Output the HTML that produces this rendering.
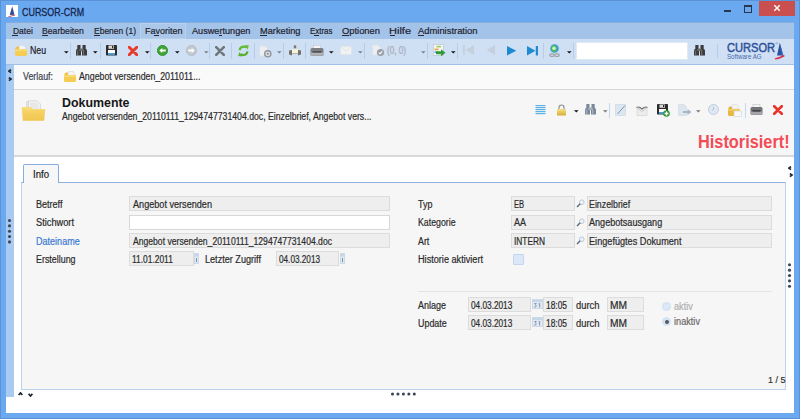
<!DOCTYPE html>
<html><head><meta charset="utf-8"><style>
html,body{margin:0;padding:0;}
body{width:800px;height:419px;position:relative;overflow:hidden;background:#6aa9f0;font-family:"Liberation Sans",sans-serif;}
.a{position:absolute;}
.t{position:absolute;white-space:nowrap;transform-origin:0 0;-webkit-text-stroke:0.2px currentColor;}
</style></head><body>
<div class="a" style="left:0px;top:0px;width:800px;height:419px;background:#6aa9f0;"></div>
<div class="a" style="left:0px;top:0px;width:800px;height:1px;background:#5b93d6;"></div>
<div class="a" style="left:0px;top:0px;width:1px;height:419px;background:#5b93d6;"></div>
<div class="a" style="left:799px;top:0px;width:1px;height:419px;background:#5b93d6;"></div>
<div class="a" style="left:0px;top:418px;width:800px;height:1px;background:#5b93d6;"></div>
<svg class="a" style="left:6px;top:5px" width="12" height="12" viewBox="0 0 12 12">
<rect width="12" height="12" fill="#fff"/>
<path d="M6.2 1.3 L8.4 9.8 L3.8 9.9 Z" fill="#2a4aa0"/>
<path d="M2.5 11.3 Q6 10.3 9 9.4 L8.8 10.6 Q6 11.4 2.5 11.9Z" fill="#c8203c"/>
</svg>
<span class="t" style="left:22.30px;top:7.00px;font-size:11.5px;line-height:11.5px;color:#15244a;transform:scaleX(0.7775);-webkit-text-stroke:0.3px currentColor;">CURSOR-CRM</span>
<div class="a" style="left:724px;top:10px;width:7px;height:2px;background:#2a3550;"></div>
<div class="a" style="left:744px;top:5px;width:6px;height:5px;border:1px solid #2a3550;border-top-width:2px;"></div>
<div class="a" style="left:759px;top:1px;width:36px;height:15px;background:#c9504f;"></div>
<svg class="a" style="left:773px;top:4px" width="8" height="8" viewBox="0 0 8 8">
<path d="M1.3 1.3 L6.7 6.7 M6.7 1.3 L1.3 6.7" stroke="#fff" stroke-width="1.4"/></svg>
<div class="a" style="left:6px;top:22px;width:788px;height:17px;background:#a4c3e8;"></div>
<div class="a" style="left:6px;top:22px;width:788px;height:1px;background:#86ade0;"></div>
<div class="a" style="left:140px;top:23px;width:46px;height:16px;background:#abc8ea;border:1px solid #b6d0ee;box-sizing:border-box;"></div>
<span class="t" style="left:12.50px;top:26.00px;font-size:9.5px;line-height:9.5px;color:#1e1e2e;transform:scaleX(0.8926);">Datei</span>
<span class="t" style="left:41.90px;top:26.00px;font-size:9.5px;line-height:9.5px;color:#1e1e2e;transform:scaleX(0.9100);">Bearbeiten</span>
<span class="t" style="left:94.00px;top:26.00px;font-size:9.5px;line-height:9.5px;color:#1e1e2e;transform:scaleX(0.8931);">Ebenen (1)</span>
<span class="t" style="left:145.00px;top:26.00px;font-size:9.5px;line-height:9.5px;color:#1e1e2e;transform:scaleX(0.9466);">Favoriten</span>
<span class="t" style="left:191.90px;top:26.00px;font-size:9.5px;line-height:9.5px;color:#1e1e2e;transform:scaleX(0.9613);">Auswertungen</span>
<span class="t" style="left:260.00px;top:26.00px;font-size:9.5px;line-height:9.5px;color:#1e1e2e;transform:scaleX(0.9711);">Marketing</span>
<span class="t" style="left:310.00px;top:26.00px;font-size:9.5px;line-height:9.5px;color:#1e1e2e;transform:scaleX(0.8354);">Extras</span>
<span class="t" style="left:342.00px;top:26.00px;font-size:9.5px;line-height:9.5px;color:#1e1e2e;transform:scaleX(0.9852);">Optionen</span>
<span class="t" style="left:389.00px;top:26.00px;font-size:9.5px;line-height:9.5px;color:#1e1e2e;transform:scaleX(1.1579);">Hilfe</span>
<span class="t" style="left:417.50px;top:26.00px;font-size:9.5px;line-height:9.5px;color:#1e1e2e;transform:scaleX(0.9887);">Administration</span>
<div class="a" style="left:12px;top:35px;width:6px;height:1px;background:#2a2a3a;"></div>
<div class="a" style="left:42px;top:35px;width:6px;height:1px;background:#2a2a3a;"></div>
<div class="a" style="left:94px;top:35px;width:6px;height:1px;background:#2a2a3a;"></div>
<div class="a" style="left:154px;top:35px;width:5px;height:1px;background:#2a2a3a;"></div>
<div class="a" style="left:219px;top:35px;width:3px;height:1px;background:#2a2a3a;"></div>
<div class="a" style="left:260px;top:35px;width:7px;height:1px;background:#2a2a3a;"></div>
<div class="a" style="left:314px;top:35px;width:5px;height:1px;background:#2a2a3a;"></div>
<div class="a" style="left:342px;top:35px;width:7px;height:1px;background:#2a2a3a;"></div>
<div class="a" style="left:390px;top:35px;width:5px;height:1px;background:#2a2a3a;"></div>
<div class="a" style="left:418px;top:35px;width:6px;height:1px;background:#2a2a3a;"></div>
<div class="a" style="left:6px;top:39px;width:788px;height:26px;background:#cfe0f5;"></div>
<div class="a" style="left:6px;top:64px;width:788px;height:1px;background:#9fc0e8;"></div>
<div class="a" style="left:6px;top:65px;width:788px;height:348px;background:#ffffff;"></div>
<div class="a" style="left:6px;top:65px;width:8px;height:332px;background:#a9cbf1;"></div>
<div class="a" style="left:14px;top:65px;width:780px;height:24px;background:#fafafa;"></div>
<div class="a" style="left:14px;top:89px;width:780px;height:1px;background:#d6d6d6;"></div>
<span class="t" style="left:23.00px;top:72.00px;font-size:10px;line-height:10px;color:#3d4453;transform:scaleX(0.8850);">Verlauf:</span>
<span class="t" style="left:79.00px;top:72.00px;font-size:10px;line-height:10px;color:#2b2b2b;transform:scaleX(0.8798);">Angebot versenden_2011011...</span>
<div class="a" style="left:14px;top:90px;width:780px;height:65px;background:#f6f6f6;"></div>
<div class="a" style="left:14px;top:155px;width:780px;height:2px;background:#d9d9d9;"></div>
<span class="t" style="left:61.50px;top:97.00px;font-size:12.5px;line-height:12.5px;color:#161616;font-weight:bold;transform:scaleX(0.9917);-webkit-text-stroke:0;">Dokumente</span>
<span class="t" style="left:61.50px;top:112.00px;font-size:10px;line-height:10px;color:#2b2b2b;transform:scaleX(0.8697);">Angebot versenden_20110111_1294747731404.doc, Einzelbrief, Angebot vers...</span>
<span class="t" style="left:697.75px;top:133.00px;font-size:18px;line-height:18px;color:#f34c57;font-weight:bold;transform:scaleX(0.9076);-webkit-text-stroke:0;">Historisiert!</span>
<div class="a" style="left:21px;top:182px;width:763px;height:206px;background:#f6f6f6;border:1px solid #bcd3ee;border-top-color:#8cb1e1;"></div>
<div class="a" style="left:23px;top:164px;width:34px;height:18px;background:#f7f7f7;border:1px solid #86ade0;border-bottom:none;border-radius:2px 2px 0 0;"></div>
<span class="t" style="left:33.00px;top:170.00px;font-size:10px;line-height:10px;color:#222;transform:scaleX(0.9581);">Info</span>
<span class="t" style="left:35.70px;top:200.00px;font-size:10px;line-height:10px;color:#2b2b2b;transform:scaleX(0.9044);">Betreff</span>
<span class="t" style="left:35.70px;top:218.00px;font-size:10px;line-height:10px;color:#2b2b2b;transform:scaleX(0.9246);">Stichwort</span>
<span class="t" style="left:35.70px;top:237.00px;font-size:10px;line-height:10px;color:#3a7ad4;transform:scaleX(0.9038);">Dateiname</span>
<span class="t" style="left:35.70px;top:255.00px;font-size:10px;line-height:10px;color:#2b2b2b;transform:scaleX(0.8886);">Erstellung</span>
<div class="a" style="left:129px;top:196px;width:261px;height:15px;background:#eeeeee;border:1px solid #dcdcdc;box-sizing:border-box;"></div>
<div class="a" style="left:129px;top:215px;width:261px;height:15px;background:#ffffff;border:1px solid #d8d8d8;box-sizing:border-box;"></div>
<div class="a" style="left:129px;top:233px;width:261px;height:15px;background:#eeeeee;border:1px solid #dcdcdc;box-sizing:border-box;"></div>
<div class="a" style="left:129px;top:251px;width:65px;height:15px;background:#eeeeee;border:1px solid #dcdcdc;box-sizing:border-box;"></div>
<div class="a" style="left:276px;top:251px;width:63px;height:15px;background:#eeeeee;border:1px solid #dcdcdc;box-sizing:border-box;"></div>
<span class="t" style="left:133.00px;top:200.00px;font-size:10px;line-height:10px;color:#2b2b2b;transform:scaleX(0.9107);">Angebot versenden</span>
<span class="t" style="left:133.00px;top:237.00px;font-size:10px;line-height:10px;color:#2b2b2b;transform:scaleX(0.8602);">Angebot versenden_20110111_1294747731404.doc</span>
<span class="t" style="left:132.00px;top:255.00px;font-size:10px;line-height:10px;color:#2b2b2b;transform:scaleX(0.8404);">11.01.2011</span>
<span class="t" style="left:205.00px;top:255.00px;font-size:10px;line-height:10px;color:#2b2b2b;transform:scaleX(0.9098);">Letzter Zugriff</span>
<span class="t" style="left:279.00px;top:255.00px;font-size:10px;line-height:10px;color:#2b2b2b;transform:scaleX(0.8192);">04.03.2013</span>
<span class="t" style="left:418.00px;top:200.00px;font-size:10px;line-height:10px;color:#2b2b2b;transform:scaleX(0.8944);">Typ</span>
<span class="t" style="left:418.00px;top:218.00px;font-size:10px;line-height:10px;color:#2b2b2b;transform:scaleX(0.8785);">Kategorie</span>
<span class="t" style="left:418.00px;top:237.00px;font-size:10px;line-height:10px;color:#2b2b2b;transform:scaleX(0.8828);">Art</span>
<span class="t" style="left:418.00px;top:255.00px;font-size:10px;line-height:10px;color:#2b2b2b;transform:scaleX(0.9136);">Historie aktiviert</span>
<div class="a" style="left:511px;top:196px;width:64px;height:15px;background:#eeeeee;border:1px solid #dcdcdc;box-sizing:border-box;"></div>
<div class="a" style="left:587px;top:196px;width:185px;height:15px;background:#eeeeee;border:1px solid #dcdcdc;box-sizing:border-box;"></div>
<span class="t" style="left:514.30px;top:200.00px;font-size:10px;line-height:10px;color:#2b2b2b;transform:scaleX(0.7566);">EB</span>
<span class="t" style="left:589.30px;top:200.00px;font-size:10px;line-height:10px;color:#2b2b2b;transform:scaleX(0.8822);">Einzelbrief</span>
<svg class="a" style="left:576px;top:199px" width="9" height="9" viewBox="0 0 9 9">
<circle cx="5.8" cy="3.2" r="2.3" fill="#eef3f8" stroke="#b9c8d8" stroke-width="1"/>
<path d="M4.2 4.8 L1 8" stroke="#56687a" stroke-width="1.4"/></svg>
<div class="a" style="left:511px;top:215px;width:64px;height:15px;background:#eeeeee;border:1px solid #dcdcdc;box-sizing:border-box;"></div>
<div class="a" style="left:587px;top:215px;width:185px;height:15px;background:#eeeeee;border:1px solid #dcdcdc;box-sizing:border-box;"></div>
<span class="t" style="left:514.30px;top:218.00px;font-size:10px;line-height:10px;color:#2b2b2b;transform:scaleX(0.8989);">AA</span>
<span class="t" style="left:589.30px;top:218.00px;font-size:10px;line-height:10px;color:#2b2b2b;transform:scaleX(0.9076);">Angebotsausgang</span>
<svg class="a" style="left:576px;top:218px" width="9" height="9" viewBox="0 0 9 9">
<circle cx="5.8" cy="3.2" r="2.3" fill="#eef3f8" stroke="#b9c8d8" stroke-width="1"/>
<path d="M4.2 4.8 L1 8" stroke="#56687a" stroke-width="1.4"/></svg>
<div class="a" style="left:511px;top:233px;width:64px;height:15px;background:#eeeeee;border:1px solid #dcdcdc;box-sizing:border-box;"></div>
<div class="a" style="left:587px;top:233px;width:185px;height:15px;background:#eeeeee;border:1px solid #dcdcdc;box-sizing:border-box;"></div>
<span class="t" style="left:514.30px;top:237.00px;font-size:10px;line-height:10px;color:#2b2b2b;transform:scaleX(0.8360);">INTERN</span>
<span class="t" style="left:589.30px;top:237.00px;font-size:10px;line-height:10px;color:#2b2b2b;transform:scaleX(0.9140);">Eingefügtes Dokument</span>
<svg class="a" style="left:576px;top:236px" width="9" height="9" viewBox="0 0 9 9">
<circle cx="5.8" cy="3.2" r="2.3" fill="#eef3f8" stroke="#b9c8d8" stroke-width="1"/>
<path d="M4.2 4.8 L1 8" stroke="#56687a" stroke-width="1.4"/></svg>
<div class="a" style="left:513px;top:254px;width:11px;height:11px;background:#dce8f7;border:1px solid #c3d6ee;box-sizing:border-box;border-radius:1px;"></div>
<div class="a" style="left:418px;top:291px;width:354px;height:1px;background:#e4e4e4;"></div>
<span class="t" style="left:418.00px;top:301.00px;font-size:10px;line-height:10px;color:#2b2b2b;transform:scaleX(0.8989);">Anlage</span>
<div class="a" style="left:468px;top:297px;width:63px;height:15px;background:#eeeeee;border:1px solid #dcdcdc;box-sizing:border-box;"></div>
<svg class="a" style="left:532px;top:299px" width="11" height="10" viewBox="0 0 11 10"><rect x="0.5" y="0.5" width="10" height="9" fill="#e1e9f3" stroke="#ccd9e8" stroke-width="1"/><rect x="1" y="1" width="9" height="2" fill="#c6d6ea"/><path d="M2.3 4.5 H4.3 L3.3 5.8 Q4.5 6.2 4.2 7.4 Q3.5 8.4 2.2 7.8 M6.5 5 L7.6 4.3 V8.5" fill="none" stroke="#8090a4" stroke-width="0.9"/></svg>
<div class="a" style="left:543px;top:297px;width:30px;height:15px;background:#eeeeee;border:1px solid #dcdcdc;box-sizing:border-box;"></div>
<div class="a" style="left:607px;top:297px;width:37px;height:15px;background:#eeeeee;border:1px solid #dcdcdc;box-sizing:border-box;"></div>
<span class="t" style="left:470.70px;top:301.00px;font-size:10px;line-height:10px;color:#2b2b2b;transform:scaleX(0.8252);">04.03.2013</span>
<span class="t" style="left:545.90px;top:301.00px;font-size:10px;line-height:10px;color:#2b2b2b;transform:scaleX(0.8383);">18:05</span>
<span class="t" style="left:575.60px;top:301.00px;font-size:10px;line-height:10px;color:#2b2b2b;transform:scaleX(0.9360);">durch</span>
<span class="t" style="left:610.00px;top:301.00px;font-size:10px;line-height:10px;color:#2b2b2b;transform:scaleX(1.0210);">MM</span>
<span class="t" style="left:418.00px;top:319.00px;font-size:10px;line-height:10px;color:#2b2b2b;transform:scaleX(0.8899);">Update</span>
<div class="a" style="left:468px;top:315px;width:63px;height:15px;background:#eeeeee;border:1px solid #dcdcdc;box-sizing:border-box;"></div>
<svg class="a" style="left:532px;top:317px" width="11" height="10" viewBox="0 0 11 10"><rect x="0.5" y="0.5" width="10" height="9" fill="#e1e9f3" stroke="#ccd9e8" stroke-width="1"/><rect x="1" y="1" width="9" height="2" fill="#c6d6ea"/><path d="M2.3 4.5 H4.3 L3.3 5.8 Q4.5 6.2 4.2 7.4 Q3.5 8.4 2.2 7.8 M6.5 5 L7.6 4.3 V8.5" fill="none" stroke="#8090a4" stroke-width="0.9"/></svg>
<div class="a" style="left:543px;top:315px;width:30px;height:15px;background:#eeeeee;border:1px solid #dcdcdc;box-sizing:border-box;"></div>
<div class="a" style="left:607px;top:315px;width:37px;height:15px;background:#eeeeee;border:1px solid #dcdcdc;box-sizing:border-box;"></div>
<span class="t" style="left:470.70px;top:319.00px;font-size:10px;line-height:10px;color:#2b2b2b;transform:scaleX(0.8252);">04.03.2013</span>
<span class="t" style="left:545.90px;top:319.00px;font-size:10px;line-height:10px;color:#2b2b2b;transform:scaleX(0.8383);">18:05</span>
<span class="t" style="left:575.60px;top:319.00px;font-size:10px;line-height:10px;color:#2b2b2b;transform:scaleX(0.9360);">durch</span>
<span class="t" style="left:610.00px;top:319.00px;font-size:10px;line-height:10px;color:#2b2b2b;transform:scaleX(1.0210);">MM</span>
<div class="a" style="left:662px;top:302px;width:9px;height:9px;border-radius:50%;background:#dde8f6;border:1px solid #d0dff1;box-sizing:border-box;"></div>
<div class="a" style="left:662px;top:317px;width:9px;height:9px;border-radius:50%;background:#d3e2f5;border:1px solid #d3e2f5;box-sizing:border-box;"></div>
<div class="a" style="left:664.5px;top:319.5px;width:4px;height:4px;background:#55575c;border-radius:50%;"></div>
<span class="t" style="left:673.75px;top:302.00px;font-size:10px;line-height:10px;color:#b0b0b0;transform:scaleX(0.9124);">aktiv</span>
<span class="t" style="left:674.00px;top:317.00px;font-size:10px;line-height:10px;color:#6b6b6b;transform:scaleX(0.9171);">inaktiv</span>
<span class="t" style="left:767.70px;top:375.00px;font-size:9.5px;line-height:9.5px;color:#333333;transform:scaleX(0.9471);">1 / 5</span>
<svg class="a" style="left:0;top:0" width="800" height="419"><circle cx="9.50" cy="220.50" r="1.55" fill="#3b4757"/><circle cx="9.50" cy="225.85" r="1.55" fill="#3b4757"/><circle cx="9.50" cy="231.20" r="1.55" fill="#3b4757"/><circle cx="9.50" cy="236.55" r="1.55" fill="#3b4757"/><circle cx="9.50" cy="241.90" r="1.55" fill="#3b4757"/></svg>
<svg class="a" style="left:0;top:0" width="800" height="419"><circle cx="789.50" cy="264.80" r="1.55" fill="#3b4757"/><circle cx="789.50" cy="270.15" r="1.55" fill="#3b4757"/><circle cx="789.50" cy="275.50" r="1.55" fill="#3b4757"/><circle cx="789.50" cy="280.85" r="1.55" fill="#3b4757"/><circle cx="789.50" cy="286.20" r="1.55" fill="#3b4757"/></svg>
<svg class="a" style="left:0;top:0" width="800" height="419"><circle cx="392.50" cy="394.00" r="1.55" fill="#3b4757"/><circle cx="397.95" cy="394.00" r="1.55" fill="#3b4757"/><circle cx="403.40" cy="394.00" r="1.55" fill="#3b4757"/><circle cx="408.85" cy="394.00" r="1.55" fill="#3b4757"/><circle cx="414.30" cy="394.00" r="1.55" fill="#3b4757"/></svg>
<svg class="a" style="left:7.5px;top:68.5px" width="5" height="5" viewBox="0 0 5 5"><path d="M3 0.6 L0.9 2.1 L3 3.6" fill="none" stroke="#1b2533" stroke-width="1.7"/></svg>
<svg class="a" style="left:7.8px;top:76.5px" width="5" height="5" viewBox="0 0 5 5"><path d="M0.9 0.6 L3 2.1 L0.9 3.6" fill="none" stroke="#1b2533" stroke-width="1.7"/></svg>
<svg class="a" style="left:788px;top:165.5px" width="5" height="5" viewBox="0 0 5 5"><path d="M3 0.6 L0.9 2.1 L3 3.6" fill="none" stroke="#1b2533" stroke-width="1.7"/></svg>
<svg class="a" style="left:788.8px;top:173px" width="5" height="5" viewBox="0 0 5 5"><path d="M0.9 0.6 L3 2.1 L0.9 3.6" fill="none" stroke="#1b2533" stroke-width="1.7"/></svg>
<svg class="a" style="left:18px;top:391.5px" width="5" height="5" viewBox="0 0 5 5"><path d="M0.6 3 L2.5 0.9 L4.4 3" fill="none" stroke="#1b2533" stroke-width="1.7"/></svg>
<svg class="a" style="left:28px;top:392.5px" width="5" height="5" viewBox="0 0 5 5"><path d="M0.6 0.9 L2.5 3 L4.4 0.9" fill="none" stroke="#1b2533" stroke-width="1.7"/></svg>
<svg class="a" style="left:15px;top:45px" width="12.0" height="11.0" viewBox="0 0 12 11"><path d="M0.5 3.5 Q0.5 1.5 2.5 1.5 H4 Q5.5 1.5 5.5 3 V5 H0.5Z" fill="#efc043"/><path d="M4 4.5 V2 Q4 0.3 6 0.3 H8 Q10 0.3 10.5 2.5 V4.5Z" fill="#f4f4f4" stroke="#cdcdcd" stroke-width="0.5"/><path d="M0 4.2 H12 V9.5 Q12 11 10.5 11 H1.5 Q0 11 0 9.5Z" fill="#f5cd52"/><path d="M0 4.2 H12 V6 H0Z" fill="#f8da73"/></svg>
<span class="t" style="left:29.90px;top:46.00px;font-size:10px;line-height:10px;color:#1e2030;transform:scaleX(0.8774);">Neu</span>
<svg class="a" style="left:64px;top:51px" width="5" height="3" viewBox="0 0 5 3"><path d="M0 0.2 H4.6 L2.3 2.6Z" fill="#111"/></svg>
<div class="a" style="left:70px;top:43px;width:1px;height:16px;background:#b3cdeb;"></div>
<svg class="a" style="left:76px;top:45px" width="11" height="11" viewBox="0 0 11 11"><rect x="1.3" y="0" width="3.2" height="4.5" rx="0.4" fill="#3b3b3b"/><rect x="6.5" y="0" width="3.2" height="4.5" rx="0.4" fill="#3b3b3b"/><rect x="4.3" y="3.5" width="2.4" height="2.8" fill="#6a6a6a"/><path d="M0.8 4 H4.6 L5 5 V10.6 H0 V5.5Z" fill="#3b3b3b"/><path d="M10.2 4 H6.4 L6 5 V10.6 H11 V5.5Z" fill="#3b3b3b"/><rect x="0.9" y="5.5" width="1.3" height="4.5" fill="#6a6a6a"/><rect x="7" y="5.5" width="1.3" height="4.5" fill="#6a6a6a"/><rect x="3.2" y="4" width="4.6" height="2" fill="#6a6a6a"/></svg>
<svg class="a" style="left:93px;top:51px" width="5" height="3" viewBox="0 0 5 3"><path d="M0 0.2 H4.6 L2.3 2.6Z" fill="#111"/></svg>
<div class="a" style="left:100px;top:43px;width:1px;height:16px;background:#b3cdeb;"></div>
<svg class="a" style="left:106px;top:45px" width="13" height="13" viewBox="0 0 13 13"><rect x="0" y="0" width="11" height="10.5" rx="0.8" fill="#2c2c2c"/><rect x="2.5" y="0.5" width="5.5" height="3.3" fill="#d9d9d9"/><rect x="6" y="1" width="1.3" height="2.2" fill="#2c2c2c"/><rect x="2" y="5" width="7" height="3.5" fill="#ffffff"/><rect x="2" y="8.3" width="7" height="1.7" fill="#3c9ad8"/></svg>
<svg class="a" style="left:128px;top:45.5px" width="10" height="10" viewBox="0 0 10 10"><path d="M1.2 1.2 L8.8 8.8 M8.8 1.2 L1.2 8.8" stroke="#e8392a" stroke-width="3" stroke-linecap="round"/></svg>
<svg class="a" style="left:144.5px;top:51px" width="5" height="3" viewBox="0 0 5 3"><path d="M0 0.2 H4.6 L2.3 2.6Z" fill="#111"/></svg>
<div class="a" style="left:150px;top:43px;width:1px;height:16px;background:#b3cdeb;"></div>
<svg class="a" style="left:157px;top:44.8px" width="11" height="11" viewBox="0 0 11 11"><circle cx="5.5" cy="5.5" r="5.1" fill="#3ea535" stroke="#268a1f" stroke-width="0.8"/><path d="M2.3 5.5 L5.2 3 V4.5 H8.7 V6.5 H5.2 V8Z" fill="#fff"/></svg>
<svg class="a" style="left:174.5px;top:51px" width="5" height="3" viewBox="0 0 5 3"><path d="M0 0.2 H4.6 L2.3 2.6Z" fill="#111"/></svg>
<svg class="a" style="left:186px;top:45px" width="11" height="11" viewBox="0 0 11 11"><circle cx="5.5" cy="5.5" r="5.1" fill="#c3c9d0" stroke="#aeb5bd" stroke-width="0.8"/><path d="M8.7 5.5 L5.8 3 V4.5 H2.3 V6.5 H5.8 V8Z" fill="#fff"/></svg>
<svg class="a" style="left:203.5px;top:51px" width="5" height="3" viewBox="0 0 5 3"><path d="M0 0.2 H4.6 L2.3 2.6Z" fill="#7a7f86"/></svg>
<div class="a" style="left:209px;top:43px;width:1px;height:16px;background:#b3cdeb;"></div>
<svg class="a" style="left:215px;top:45.5px" width="10" height="10" viewBox="0 0 10 10"><path d="M1.2 1.2 L8.8 8.8 M8.8 1.2 L1.2 8.8" stroke="#6f767e" stroke-width="2.6" stroke-linecap="round"/></svg>
<div class="a" style="left:231px;top:43px;width:1px;height:16px;background:#b3cdeb;"></div>
<svg class="a" style="left:238px;top:44.5px" width="11" height="12" viewBox="0 0 11 12"><path d="M1.6 5.2 Q2.2 1.5 6 1.6 Q7.6 1.7 8.4 2.6" fill="none" stroke="#62bb30" stroke-width="2.2"/><path d="M6.8 0 L10.8 0.6 L9.6 4.6Z" fill="#62bb30"/><path d="M9.4 6.4 Q8.8 10.1 5 10 Q3.4 9.9 2.6 9" fill="none" stroke="#58b028" stroke-width="2.2"/><path d="M4.2 11.6 L0.2 11 L1.4 7Z" fill="#58b028"/></svg>
<div class="a" style="left:254px;top:43px;width:1px;height:16px;background:#b3cdeb;"></div>
<svg class="a" style="left:259px;top:44.5px" width="13" height="13" viewBox="0 0 13 13"><path d="M0.5 1 H6 L8.5 3.5 V11 H0.5Z" fill="#eceef1" stroke="#dcdfe3" stroke-width="0.7"/><circle cx="8.8" cy="8.8" r="3.1" fill="#eef0f2" stroke="#8f959c" stroke-width="1.4"/><path d="M8.8 7.3 V10.3 M7.3 8.8 H10.3" stroke="#8f959c" stroke-width="1"/></svg>
<svg class="a" style="left:277px;top:51px" width="5" height="3" viewBox="0 0 5 3"><path d="M0 0.2 H4.6 L2.3 2.6Z" fill="#7a7f86"/></svg>
<div class="a" style="left:283px;top:43px;width:1px;height:16px;background:#b3cdeb;"></div>
<svg class="a" style="left:289px;top:44.5px" width="12" height="11" viewBox="0 0 12 11"><rect x="4.8" y="0.3" width="2.4" height="3.5" fill="#7d7a6e"/><path d="M2 5 L5 3.5 H7 L10 5 V8 H2Z" fill="#eeebd6"/><path d="M0 5.5 L3 5 V10.5 L0 9.5Z" fill="#747268"/><path d="M12 5.5 L9 5 V10.5 L12 9.5Z" fill="#747268"/><rect x="3" y="5" width="6" height="3" fill="#f4f2e2"/><rect x="3" y="8" width="6" height="1" fill="#b9b69f"/></svg>
<div class="a" style="left:305px;top:43px;width:1px;height:16px;background:#b3cdeb;"></div>
<svg class="a" style="left:310px;top:45px" width="14" height="11" viewBox="0 0 14 11"><rect x="3.5" y="0.3" width="7" height="3.5" fill="#f5f5f5" stroke="#c4c4c4" stroke-width="0.6"/><path d="M0.5 4.5 Q0.5 3 2 3 H12 Q13.5 3 13.5 4.5 V10 Q13.5 10.8 12.7 10.8 H1.3 Q0.5 10.8 0.5 10Z" fill="#7c7f83"/><rect x="1" y="7.5" width="12" height="3" fill="#b0b3b6"/><rect x="2.5" y="6.3" width="9" height="1.2" fill="#3c3e41"/></svg>
<svg class="a" style="left:329px;top:51px" width="5" height="3" viewBox="0 0 5 3"><path d="M0 0.2 H4.6 L2.3 2.6Z" fill="#111"/></svg>
<svg class="a" style="left:340px;top:46px" width="12" height="9" viewBox="0 0 12 9"><rect x="0.3" y="0.3" width="11.4" height="8.4" fill="#eff1f3" stroke="#dde1e5" stroke-width="0.6"/><path d="M0.5 0.5 L6 5 L11.5 0.5" fill="none" stroke="#dde1e5" stroke-width="0.7"/></svg>
<svg class="a" style="left:358px;top:51px" width="5" height="3" viewBox="0 0 5 3"><path d="M0 0.2 H4.6 L2.3 2.6Z" fill="#7a7f86"/></svg>
<div class="a" style="left:364px;top:43px;width:1px;height:16px;background:#b3cdeb;"></div>
<svg class="a" style="left:371.5px;top:44px" width="13" height="13" viewBox="0 0 13 13"><path d="M0.5 1 H6 L8.5 3.5 V11 H0.5Z" fill="#eceef1" stroke="#dcdfe3" stroke-width="0.7"/><circle cx="8.5" cy="8.5" r="3.6" fill="#9aa0a8"/><path d="M6.8 8.6 L8.1 9.8 L10.2 7.3" fill="none" stroke="#fff" stroke-width="1.1"/></svg>
<span class="t" style="left:387.00px;top:46.00px;font-size:10px;line-height:10px;color:#a7a9b6;transform:scaleX(0.8137);">(0, 0)</span>
<svg class="a" style="left:421px;top:51px" width="5" height="3" viewBox="0 0 5 3"><path d="M0 0.2 H4.6 L2.3 2.6Z" fill="#7a7f86"/></svg>
<div class="a" style="left:427px;top:43px;width:1px;height:16px;background:#b3cdeb;"></div>
<svg class="a" style="left:433px;top:44px" width="13" height="13" viewBox="0 0 13 13"><rect x="0.3" y="0.3" width="10" height="11" fill="#f4f6f8" stroke="#b9bec4" stroke-width="0.6"/><rect x="3.5" y="1.8" width="4.5" height="1.6" fill="#9ccf4a"/><rect x="1.5" y="4.6" width="4" height="1.6" fill="#f2a33a"/><rect x="1.5" y="7.3" width="3" height="1.6" fill="#4a9fe0"/><path d="M3 7.3 H8 V5.3 L12.5 8.8 L8 12.3 V10.3 H3Z" fill="#2e9a3b"/></svg>
<svg class="a" style="left:451px;top:51px" width="5" height="3" viewBox="0 0 5 3"><path d="M0 0.2 H4.6 L2.3 2.6Z" fill="#111"/></svg>
<div class="a" style="left:457px;top:43px;width:1px;height:16px;background:#b3cdeb;"></div>
<svg class="a" style="left:463px;top:45px" width="11" height="10" viewBox="0 0 11 10"><rect x="0" y="0" width="1.8" height="10" fill="#c4d0dd"/><path d="M11 0 V10 L2.5 5Z" fill="#c4d0dd"/></svg>
<svg class="a" style="left:486px;top:45px" width="9" height="10" viewBox="0 0 9 10"><path d="M9 0 V10 L0.5 5Z" fill="#c4d0dd"/></svg>
<svg class="a" style="left:506.5px;top:45.5px" width="10" height="10" viewBox="0 0 10 10"><path d="M0 0 V9.5 L9.3 4.75Z" fill="#1e8bd0"/></svg>
<svg class="a" style="left:527px;top:45.5px" width="11" height="10" viewBox="0 0 11 10"><path d="M0 0 V9.5 L8.5 4.75Z" fill="#1e8bd0"/><rect x="8.8" y="0" width="2.2" height="9.5" fill="#1e8bd0"/></svg>
<div class="a" style="left:543px;top:43px;width:1px;height:16px;background:#b3cdeb;"></div>
<svg class="a" style="left:549px;top:44px" width="11" height="13" viewBox="0 0 11 13"><circle cx="5.5" cy="4.5" r="4.3" fill="#3d9bd8"/><path d="M2.2 2.5 Q4.5 0.5 6.5 2 Q8.5 3.5 7.5 6.5 Q5.5 8.5 3.5 7.5 Q1.5 5 2.2 2.5Z" fill="#4fc04a"/><circle cx="5" cy="4.2" r="1.7" fill="#e9fbe8" opacity="0.85"/><rect x="0.8" y="9.8" width="4.4" height="2.6" rx="1.3" fill="none" stroke="#a3a3a3" stroke-width="1.3"/><rect x="5.8" y="9.8" width="4.4" height="2.6" rx="1.3" fill="none" stroke="#a3a3a3" stroke-width="1.3"/></svg>
<svg class="a" style="left:567px;top:51px" width="5" height="3" viewBox="0 0 5 3"><path d="M0 0.2 H4.6 L2.3 2.6Z" fill="#111"/></svg>
<div class="a" style="left:573px;top:43px;width:1px;height:16px;background:#b3cdeb;"></div>
<div class="a" style="left:576px;top:42px;width:112px;height:18px;background:#ffffff;border:1px solid #e1e9f3;box-sizing:border-box;"></div>
<svg class="a" style="left:694px;top:45px" width="11" height="11" viewBox="0 0 11 11"><rect x="1.3" y="0" width="3.2" height="4.5" rx="0.4" fill="#3b3b3b"/><rect x="6.5" y="0" width="3.2" height="4.5" rx="0.4" fill="#3b3b3b"/><rect x="4.3" y="3.5" width="2.4" height="2.8" fill="#6a6a6a"/><path d="M0.8 4 H4.6 L5 5 V10.6 H0 V5.5Z" fill="#3b3b3b"/><path d="M10.2 4 H6.4 L6 5 V10.6 H11 V5.5Z" fill="#3b3b3b"/><rect x="0.9" y="5.5" width="1.3" height="4.5" fill="#6a6a6a"/><rect x="7" y="5.5" width="1.3" height="4.5" fill="#6a6a6a"/><rect x="3.2" y="4" width="4.6" height="2" fill="#6a6a6a"/></svg>
<div class="a" style="left:717px;top:44px;width:1px;height:14px;background:#b2cdee;"></div>
<span class="t" style="left:727.40px;top:42.00px;font-size:12.5px;line-height:12.5px;color:#2f519a;transform:scaleX(0.8877);-webkit-text-stroke:0.5px currentColor;">CURSOR</span>
<span class="t" style="left:727.40px;top:53.00px;font-size:7.5px;line-height:7.5px;color:#4a6aa8;transform:scaleX(0.8216);-webkit-text-stroke:0;">Software AG</span>
<svg class="a" style="left:772px;top:41px" width="14" height="19" viewBox="0 0 14 19"><path d="M7.8 1.8 Q6.5 8 5 14.6 H11.3Z" fill="#2b4fa3"/><path d="M7.8 1.8 L9.5 14.6 H11.3Z" fill="#3f68bd"/><path d="M2.8 17.2 Q7.5 16.2 12.2 13.8 L12.5 15.5 Q8 18 3.2 18.6Z" fill="#d9304c"/><circle cx="4.6" cy="2.3" r="0.9" fill="none" stroke="#5a78b0" stroke-width="0.4"/></svg>
<svg class="a" style="left:64px;top:71px" width="12.0" height="11.0" viewBox="0 0 12 11"><path d="M0.5 3.5 Q0.5 1.5 2.5 1.5 H4 Q5.5 1.5 5.5 3 V5 H0.5Z" fill="#efc043"/><path d="M4 4.5 V2 Q4 0.3 6 0.3 H8 Q10 0.3 10.5 2.5 V4.5Z" fill="#f4f4f4" stroke="#cdcdcd" stroke-width="0.5"/><path d="M0 4.2 H12 V9.5 Q12 11 10.5 11 H1.5 Q0 11 0 9.5Z" fill="#f5cd52"/><path d="M0 4.2 H12 V6 H0Z" fill="#f8da73"/></svg>
<svg class="a" style="left:21px;top:100px" width="25" height="21" viewBox="0 0 25 21">
<defs><linearGradient id="fg" x1="0" y1="0" x2="0" y2="1"><stop offset="0" stop-color="#f8d86e"/><stop offset="1" stop-color="#f0c54e"/></linearGradient></defs>
<path d="M5.5 1.5 H14 L17 4 V12 H5.5Z" fill="#e4e4e4" stroke="#d0d0d0" stroke-width="0.6"/>
<path d="M7.5 0.8 H16 L19.5 3.8 V12 H7.5Z" fill="#f0f0f0" stroke="#cfcfcf" stroke-width="0.6"/>
<path d="M9.5 4 H16 M9.5 6 H17.5 M9.5 8 H17.5" stroke="#d8d8d8" stroke-width="0.7"/>
<path d="M0.8 7.2 H10 L11.2 9 H24.2 L23.2 20.8 H1.8Z" fill="url(#fg)"/>
<path d="M0.8 7.2 H10 L11.2 9 H24.2 V9.8 H0.8Z" fill="#f9dc7a"/>
</svg>
<svg class="a" style="left:535px;top:105px" width="11" height="10" viewBox="0 0 11 10"><rect x="0.5" y="0" width="10" height="1.2" fill="#5fb2e6"/><rect x="0.5" y="2" width="10" height="1.2" fill="#5fb2e6"/><rect x="0.5" y="4" width="10" height="1.2" fill="#5fb2e6"/><rect x="0.5" y="6" width="10" height="1.2" fill="#5fb2e6"/><rect x="0.5" y="8" width="10" height="1.2" fill="#5fb2e6"/></svg>
<svg class="a" style="left:556px;top:103.5px" width="11" height="12" viewBox="0 0 11 12"><defs><linearGradient id="lg" x1="0" y1="0" x2="0" y2="1"><stop offset="0" stop-color="#f7e08a"/><stop offset="1" stop-color="#d9ad3a"/></linearGradient></defs><path d="M3 5.5 V3.5 A2.5 2.5 0 0 1 8 3.5 V5.5" fill="none" stroke="#8f8f8f" stroke-width="1.2"/><rect x="1" y="5" width="9" height="6.5" rx="0.6" fill="url(#lg)"/></svg>
<svg class="a" style="left:574px;top:110px" width="5" height="3" viewBox="0 0 5 3"><path d="M0 0.2 H4.6 L2.3 2.6Z" fill="#111"/></svg>
<svg class="a" style="left:584.5px;top:104px" width="11" height="11" viewBox="0 0 11 11"><rect x="1.3" y="0" width="3.2" height="4.5" rx="0.4" fill="#7a8898"/><rect x="6.5" y="0" width="3.2" height="4.5" rx="0.4" fill="#7a8898"/><rect x="4.3" y="3.5" width="2.4" height="2.8" fill="#a2afbd"/><path d="M0.8 4 H4.6 L5 5 V10.6 H0 V5.5Z" fill="#7a8898"/><path d="M10.2 4 H6.4 L6 5 V10.6 H11 V5.5Z" fill="#7a8898"/><rect x="0.9" y="5.5" width="1.3" height="4.5" fill="#a2afbd"/><rect x="7" y="5.5" width="1.3" height="4.5" fill="#a2afbd"/><rect x="3.2" y="4" width="4.6" height="2" fill="#a2afbd"/></svg>
<svg class="a" style="left:602.5px;top:110px" width="5" height="3" viewBox="0 0 5 3"><path d="M0 0.2 H4.6 L2.3 2.6Z" fill="#777"/></svg>
<div class="a" style="left:609px;top:103px;width:1px;height:15px;background:#c3d8f0;"></div>
<svg class="a" style="left:615px;top:104px" width="12" height="12" viewBox="0 0 12 12"><rect x="0.5" y="0.5" width="10" height="11" fill="#dde7f2" stroke="#c6d3e1" stroke-width="0.6"/><path d="M2.5 10 L10 1.5" stroke="#7f96b0" stroke-width="1"/></svg>
<svg class="a" style="left:636px;top:103.5px" width="12" height="12" viewBox="0 0 12 12"><rect x="1" y="4.5" width="10" height="7" fill="#ececec" stroke="#cfcfcf" stroke-width="0.6"/><path d="M0.5 3.5 Q3 2 6 5 Q9 2 11.5 3.5" fill="none" stroke="#6f6f6f" stroke-width="1.1"/><path d="M2 4.5 L6 7.5 L10 4.5" fill="none" stroke="#bdbdbd" stroke-width="0.7"/></svg>
<svg class="a" style="left:657px;top:104px" width="13" height="13" viewBox="0 0 13 13"><rect x="0" y="0" width="11" height="10.5" rx="0.8" fill="#2c2c2c"/><rect x="2.5" y="0.5" width="5.5" height="3.3" fill="#d9d9d9"/><rect x="6" y="1" width="1.3" height="2.2" fill="#2c2c2c"/><rect x="2" y="5" width="7" height="3.5" fill="#ffffff"/><rect x="2" y="8.3" width="7" height="1.7" fill="#3c9ad8"/><circle cx="9.5" cy="9.5" r="3.3" fill="#2f9a3a"/><path d="M9.5 7.6 V11.4 M7.6 9.5 H11.4" stroke="#fff" stroke-width="1.3"/></svg>
<svg class="a" style="left:677.5px;top:104px" width="14" height="12" viewBox="0 0 14 12"><path d="M0.5 0.5 H6 L8.5 3 V11.5 H0.5Z" fill="#dde6ef" stroke="#ccd6e0" stroke-width="0.6"/><path d="M5 7 H9.5 V5 L13.5 8 L9.5 11 V9 H5Z" fill="#a7b6c6"/></svg>
<svg class="a" style="left:696px;top:110px" width="5" height="3" viewBox="0 0 5 3"><path d="M0 0.2 H4.6 L2.3 2.6Z" fill="#777"/></svg>
<svg class="a" style="left:707.5px;top:104px" width="11" height="11" viewBox="0 0 11 11"><circle cx="5.5" cy="5.5" r="5" fill="#dfe8f3" stroke="#b4c5d8" stroke-width="0.8"/><path d="M5.5 2.8 V5.5 L4 6.5" fill="none" stroke="#a3b3c4" stroke-width="0.7"/></svg>
<svg class="a" style="left:727.5px;top:103.5px" width="14" height="13" viewBox="0 0 14 13"><path d="M0.5 4 Q0.5 2.5 2 2.5 H4 Q5 2.5 5.5 3.5 V6 H0.5Z" fill="#e3b13c"/><path d="M4 5 V2 Q4 0.5 6 0.5 H8 Q10 0.5 10.5 2.5 V5Z" fill="#f3f3f3" stroke="#d2d2d2" stroke-width="0.5"/><path d="M0 5 H12 V10.5 Q12 12 10.5 12 H1.5 Q0 12 0 10.5Z" fill="#e9b843"/><path d="M0 5 H12 V6.8 H0Z" fill="#f2cb60"/><rect x="6" y="7" width="7.3" height="5.7" fill="#f7f7f7" stroke="#d4d4d4" stroke-width="0.6"/></svg>
<div class="a" style="left:745px;top:103px;width:1px;height:15px;background:#c3d8f0;"></div>
<svg class="a" style="left:750px;top:104px" width="13" height="11" viewBox="0 0 13 11"><rect x="3" y="0.3" width="7" height="3.5" fill="#f5f5f5" stroke="#c4c4c4" stroke-width="0.6"/><path d="M0.5 4.5 Q0.5 3 2 3 H11 Q12.5 3 12.5 4.5 V10 Q12.5 10.8 11.7 10.8 H1.3 Q0.5 10.8 0.5 10Z" fill="#707377"/><rect x="1" y="7.5" width="11" height="3" fill="#a3a6aa"/><rect x="2.5" y="6.3" width="8" height="1.2" fill="#2f3134"/></svg>
<svg class="a" style="left:772.8px;top:104.8px" width="10" height="10" viewBox="0 0 10 10"><path d="M1.2 1.2 L8.8 8.8 M8.8 1.2 L1.2 8.8" stroke="#e8352a" stroke-width="2.7" stroke-linecap="round"/></svg>
<svg class="a" style="left:194px;top:253px" width="5" height="11" viewBox="0 0 5 11"><rect x="0.5" y="0.5" width="4" height="10" fill="#e1e9f3" stroke="#ccd9e8" stroke-width="1"/><rect x="1" y="1" width="3" height="2.5" fill="#c6d6ea"/><path d="M2.5 5 V9" stroke="#8090a4" stroke-width="1"/></svg>
<svg class="a" style="left:340px;top:253px" width="5" height="11" viewBox="0 0 5 11"><rect x="0.5" y="0.5" width="4" height="10" fill="#e1e9f3" stroke="#ccd9e8" stroke-width="1"/><rect x="1" y="1" width="3" height="2.5" fill="#c6d6ea"/><path d="M2.5 5 V9" stroke="#8090a4" stroke-width="1"/></svg>
</body></html>
